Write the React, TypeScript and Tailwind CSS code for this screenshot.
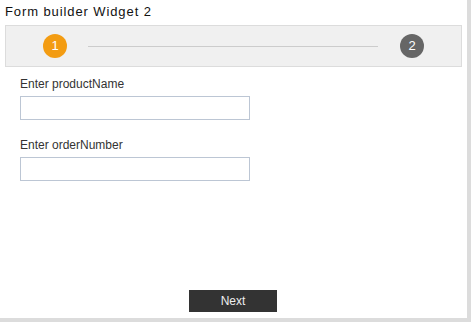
const fields = ['productName', 'orderNumber']

function App() {
    return (
        <div className="w-[471px] h-[322px] bg-[#dcdcdc] font-['Liberation_Sans',Arial,sans-serif]">
            <div className="w-[467px] h-[318px] bg-white flex flex-col">
                <h1 className="pl-[5px] pt-[4px] h-[25px] text-[13px] leading-[16px] tracking-[0.9px] text-[#111]">
                    Form builder Widget 2
                </h1>
                <div className="mx-[5px] h-[42px] border border-[#dcdcdc] bg-[#f0f0f0] flex items-center pl-[37px] pr-[37px]">
                    <div className="w-6 h-6 rounded-full bg-[#f39c12] text-white text-[13px] flex items-center justify-center">1</div>
                    <div className="flex-1 h-px bg-[#cccccc] ml-[21px] mr-[22px]" />
                    <div className="w-6 h-6 rounded-full bg-[#666666] text-white text-[13px] flex items-center justify-center">2</div>
                </div>
                <div className="pl-[20px] pt-[10px] flex flex-col">
                    {fields.map((f, i) => (
                        <div key={f} className={i > 0 ? 'mt-[18px]' : ''}>
                            <label className="block text-[12px] leading-[14px] text-[#333]">Enter {f}</label>
                            <input type="text" className="mt-[5px] block w-[230px] h-[24px] border border-[#bcc6d4] bg-white outline-none" />
                        </div>
                    ))}
                </div>
                <div className="flex-1" />
                <div className="flex justify-center pb-[6px]">
                    <button type="button" className="w-[88px] h-[22px] bg-[#333333] text-[#eeeeee] text-[12px] ml-[-1px]">Next</button>
                </div>
            </div>
        </div>
    )
}

export default App
